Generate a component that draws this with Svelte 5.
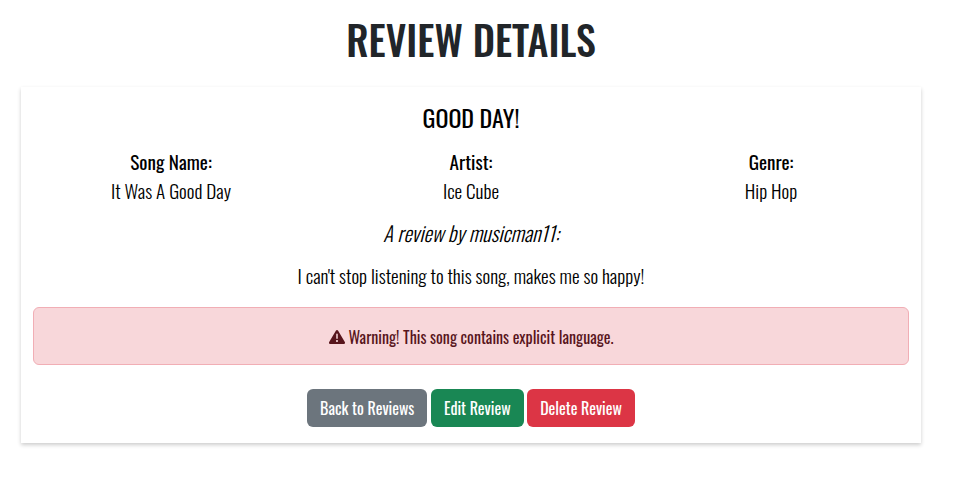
<script>
  const details = [
    { label: 'Song Name:', value: 'It Was A Good Day' },
    { label: 'Artist:', value: 'Ice Cube' },
    { label: 'Genre:', value: 'Hip Hop' }
  ];
  const actions = [
    { text: 'Back to Reviews', kind: 'secondary' },
    { text: 'Edit Review', kind: 'success' },
    { text: 'Delete Review', kind: 'danger' }
  ];
</script>

<main>
  <h1>REVIEW DETAILS</h1>
  <section class="card">
    <h2>GOOD DAY!</h2>
    <div class="details">
      {#each details as d}
        <div class="detail">
          <strong>{d.label}</strong>
          <p>{d.value}</p>
        </div>
      {/each}
    </div>
    <p class="author"><em>A review by musicman11:</em></p>
    <p class="body">I can't stop listening to this song, makes me so happy!</p>
    <div class="alert">
      <svg width="16" height="16" viewBox="0 0 512 512" aria-hidden="true">
        <path fill="currentColor" d="M506.300 417l-213.300-364c-16.300-28-57.500-28-73.800 0l-213.200 364C-10.600 444.900 9.900 480 42.700 480h426.600C502 480 522.500 445 506.300 417zM232 168c0-13.300 10.700-24 24-24s24 10.700 24 24v128c0 13.300-10.700 24-23.100 24S232 309.300 232 296V168zM256 416c-17.400 0-31.400-14-31.400-31.400s14-31.400 31.400-31.400 31.400 14 31.400 31.400S273.400 416 256 416z" />
      </svg>
      <span>Warning! This song contains explicit language.</span>
    </div>
    <div class="actions">
      {#each actions as a}
        <button class={a.kind}>{a.text}</button>
      {/each}
    </div>
  </section>
</main>

<style>
  :global(body) {
    background: #fff;
  }
  main {
    box-sizing: border-box;
    width: 900px;
    min-height: 477px;
    margin-left: 21px;
    padding-top: 15px;
    color: #000;
    font-family: "Oswald", "Roboto", sans-serif;
    text-align: center;
  }
  h1, h2, p {
    margin: 0;
  }
  h1 {
    font-size: 40px;
    line-height: 48px;
    font-weight: 500;
    color: #212529;
  }
  .card {
    box-sizing: border-box;
    height: 356px;
    margin-top: 24px;
    padding: 16px 12px;
    box-shadow: 0 2px 4px 0 rgba(0, 0, 0, 0.2);
  }
  h2 {
    font-size: 24px;
    line-height: 29px;
    font-weight: 400;
  }
  .details {
    display: flex;
    margin: 15px -12px 0;
  }
  .detail {
    flex: 1;
    font-size: 19.200px;
    line-height: 29px;
  }
  strong {
    display: block;
    font-weight: 400;
  }
  p {
    font-weight: 300;
  }
  .author, .body {
    margin-top: 13px;
    font-size: 19.200px;
    line-height: 29px;
  }
  .author {
    font-size: 20.800px;
  }
  .body {
    margin-top: 14px;
  }
  .alert {
    box-sizing: border-box;
    display: flex;
    justify-content: center;
    align-items: center;
    gap: 4px;
    height: 58px;
    margin-top: 17px;
    padding-top: 2px;
    border: 1px solid #f1aeb5;
    border-radius: 6px;
    background: #f8d7da;
    color: #58151c;
    font-size: 16px;
    line-height: 24px;
  }
  .actions {
    display: flex;
    justify-content: center;
    gap: 3.600px;
    margin-top: 24px;
  }
  button {
    box-sizing: border-box;
    height: 38px;
    padding: 0 13px;
    border: 0;
    border-radius: 6px;
    color: #fff;
    font: 400 16px/24px "Oswald", "Roboto", sans-serif;
  }
  .secondary { background: #6c757d; }
  .success { background: #198754; }
  .danger { background: #dc3545; }
</style>
